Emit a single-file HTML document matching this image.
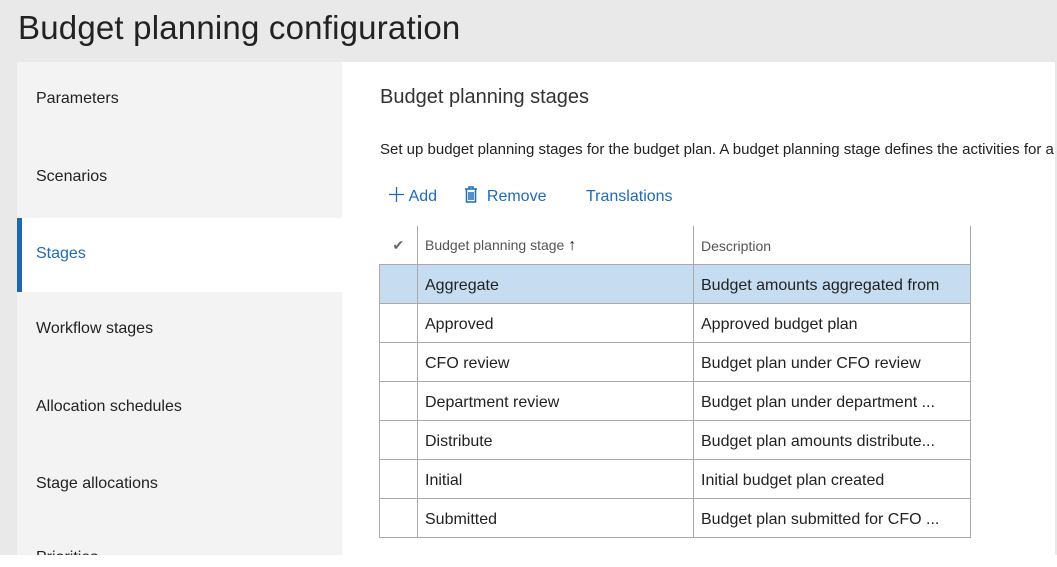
<!DOCTYPE html>
<html><head><style>
body{margin:0;width:1057px;height:562px;background:#fff;font-family:"Liberation Sans",sans-serif;position:relative;overflow:hidden;color:#222}
.top{position:absolute;left:0;top:0;width:1057px;height:62px;background:#e9e9e9}
.top h1{margin:0;position:absolute;left:18px;top:9px;font-weight:normal;font-size:33px;color:#222;letter-spacing:0.2px}
.leftg{position:absolute;left:0;top:62px;width:17px;height:493px;background:#e9e9e9}
.rightg{position:absolute;left:1055px;top:62px;width:2px;height:493px;background:#e9e9e9}
.nav{position:absolute;left:17px;top:62px;width:325px;height:493px;background:#f3f3f3}
.nav div{position:absolute;left:19px;font-size:16px;color:#222}
.sel{position:absolute;left:0;top:156px;width:325px;height:74px;background:#fff}
.bar{position:absolute;left:0;top:156px;width:5px;height:74px;background:#1f68b0}
h2{position:absolute;left:380px;top:86px;margin:0;font-weight:normal;font-size:20px;color:#333}
.desc{position:absolute;left:380px;top:141px;font-size:15px;color:#222;white-space:nowrap}
.tb{position:absolute;top:184px;font-size:16px;color:#1f6bb5;line-height:18px}
table{position:absolute;left:379px;top:226px;border-collapse:collapse;font-size:16px;table-layout:fixed}
td{border:1px solid #aaa;height:39px;padding:5px 0 0 7px;box-sizing:border-box;white-space:nowrap;color:#222;overflow:hidden}
tr.h td{font-size:14px;color:#555;border-top:none;height:38px;padding-top:2px}
tr.h td:first-child{border-left:none}
tr.s td{background:#c6ddf1}
td:first-child{padding:0}
</style></head><body>
<div class="top"><h1>Budget planning configuration</h1></div>
<div class="leftg"></div><div class="rightg"></div>
<div class="nav">
<div class="sel" style="left:0"></div><div class="bar" style="left:0"></div>
<div style="top:28px">Parameters</div>
<div style="top:106px">Scenarios</div>
<div style="top:183px;color:#1f6bb5">Stages</div>
<div style="top:258px">Workflow stages</div>
<div style="top:336px">Allocation schedules</div>
<div style="top:413px">Stage allocations</div>
<div style="top:487px">Priorities</div>
</div>
<div style="position:absolute;left:0;top:555px;width:1057px;height:7px;background:#fff"></div>
<h2>Budget planning stages</h2>
<div class="desc">Set up budget planning stages for the budget plan. A budget planning stage defines the activities for a</div>
<div class="tb" style="left:388px"><svg width="17" height="17" viewBox="0 0 17 17" style="position:relative;top:2px"><path d="M8.5 1v15M1 8.5h15" stroke="#1f6bb5" stroke-width="1.3"/></svg> Add</div>
<div class="tb" style="left:464px"><svg width="14" height="17" viewBox="0 0 14 17" style="position:relative;top:2px"><path d="M1 3h12M5 3V1h4v2M2.5 3v13h9V3M5 6v8M7 6v8M9 6v8" fill="none" stroke="#1f6bb5" stroke-width="1.5"/></svg> &nbsp;Remove</div>
<div class="tb" style="left:586px;top:188px">Translations</div>
<table>
<colgroup><col style="width:38px"><col style="width:276px"><col style="width:277px"></colgroup>
<tr class="h"><td style="text-align:center;color:#666">✔</td><td>Budget planning stage <span style="color:#222;font-size:16px">↑</span></td><td>Description</td></tr>
<tr class="s"><td></td><td>Aggregate</td><td>Budget amounts aggregated from</td></tr>
<tr><td></td><td>Approved</td><td>Approved budget plan</td></tr>
<tr><td></td><td>CFO review</td><td>Budget plan under CFO review</td></tr>
<tr><td></td><td>Department review</td><td>Budget plan under department ...</td></tr>
<tr><td></td><td>Distribute</td><td>Budget plan amounts distribute...</td></tr>
<tr><td></td><td>Initial</td><td>Initial budget plan created</td></tr>
<tr><td></td><td>Submitted</td><td>Budget plan submitted for CFO ...</td></tr>
</table>
</body></html>
